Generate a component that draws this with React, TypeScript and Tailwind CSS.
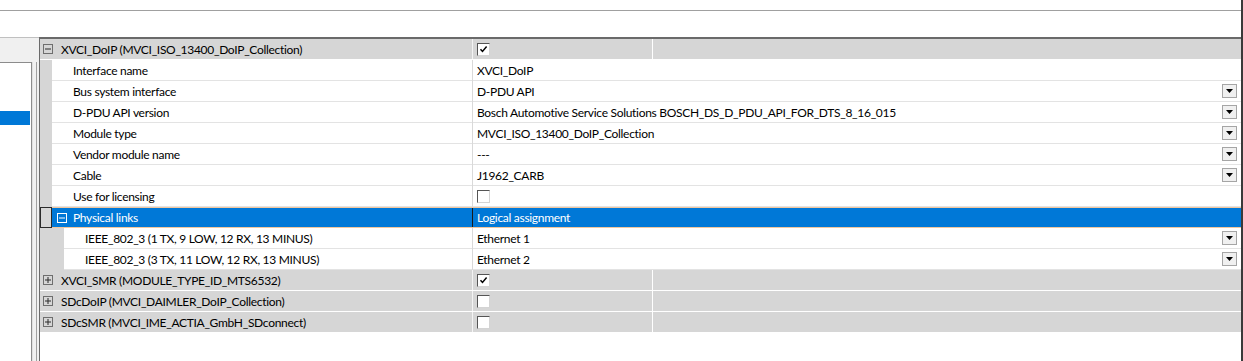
import React from "react";

type Row =
  | { kind: "group"; label: string; checked: boolean; expanded: boolean }
  | { kind: "prop"; level: 1 | 2; label: string; value?: string; dd?: boolean; check?: boolean }
  | { kind: "sel"; label: string; value: string };

const rows: Row[] = [
  { kind: "group", label: "XVCI_DoIP (MVCI_ISO_13400_DoIP_Collection)", checked: true, expanded: true },
  { kind: "prop", level: 1, label: "Interface name", value: "XVCI_DoIP" },
  { kind: "prop", level: 1, label: "Bus system interface", value: "D-PDU API", dd: true },
  { kind: "prop", level: 1, label: "D-PDU API version", value: "Bosch Automotive Service Solutions BOSCH_DS_D_PDU_API_FOR_DTS_8_16_015", dd: true },
  { kind: "prop", level: 1, label: "Module type", value: "MVCI_ISO_13400_DoIP_Collection", dd: true },
  { kind: "prop", level: 1, label: "Vendor module name", value: "---", dd: true },
  { kind: "prop", level: 1, label: "Cable", value: "J1962_CARB", dd: true },
  { kind: "prop", level: 1, label: "Use for licensing", check: true },
  { kind: "sel", label: "Physical links", value: "Logical assignment" },
  { kind: "prop", level: 2, label: "IEEE_802_3 (1 TX, 9 LOW, 12 RX, 13 MINUS)", value: "Ethernet 1", dd: true },
  { kind: "prop", level: 2, label: "IEEE_802_3 (3 TX, 11 LOW, 12 RX, 13 MINUS)", value: "Ethernet 2", dd: true },
  { kind: "group", label: "XVCI_SMR (MODULE_TYPE_ID_MTS6532)", checked: true, expanded: false },
  { kind: "group", label: "SDcDoIP (MVCI_DAIMLER_DoIP_Collection)", checked: false, expanded: false },
  { kind: "group", label: "SDcSMR (MVCI_IME_ACTIA_GmbH_SDconnect)", checked: false, expanded: false },
];

function ExpandBox({ expanded, light }: { expanded: boolean; light?: boolean }) {
  const c = light ? "#ffffff" : "#2a2a2a";
  return (
    <svg width="10" height="10" viewBox="0 0 10 10" className="shrink-0">
      <rect x="0.5" y="0.5" width="9" height="9" fill="none" stroke={light ? "#ffffff" : "#6e6e6e"} />
      <line x1="2" y1="5" x2="8" y2="5" stroke={c} />
      {!expanded && <line x1="5" y1="2" x2="5" y2="8" stroke={c} />}
    </svg>
  );
}

function CheckBox({ checked }: { checked: boolean }) {
  return (
    <div className="w-[13px] h-[13px] bg-white border-t border-l border-t-[#555] border-l-[#555] border-b border-r border-b-[#d4d4d4] border-r-[#d4d4d4] flex items-center justify-center shrink-0">
      {checked && (
        <svg width="9" height="9" viewBox="0 0 9 9">
          <path d="M1.5 4.2 L3.5 6.4 L7.6 1.6" fill="none" stroke="#000" strokeWidth="1.5" />
        </svg>
      )}
    </div>
  );
}

function DropBtn() {
  return (
    <div className="w-[15px] h-[14px] bg-[#f0f0f0] border border-[#a5a5a5] flex items-center justify-center shrink-0">
      <svg width="7" height="4" viewBox="0 0 7 4">
        <path d="M0 0 H7 L3.5 4 Z" fill="#000" />
      </svg>
    </div>
  );
}

function GridRow({ row }: { row: Row }) {
  if (row.kind === "group") {
    return (
      <div className="flex h-[21px] bg-[#d6d6d6] border-b border-white">
        <div className="w-[432px] flex items-center pl-[3px]">
          <ExpandBox expanded={row.expanded} />
          <span className="ml-[8px] text-black whitespace-nowrap pt-px">{row.label}</span>
        </div>
        <div className="w-px bg-[#f4f4f4]" />
        <div className="w-[179px] flex items-center pl-[4px]">
          <CheckBox checked={row.checked} />
        </div>
        <div className="w-px bg-white" />
        <div className="flex-1" />
      </div>
    );
  }
  if (row.kind === "sel") {
    return (
      <div className="flex h-[21px]">
        <div className="w-[12px] border border-[#2a2a2a] bg-[#d6d6d6]" />
        <div className="flex-1 flex border-y border-[#f1c79f] bg-[#0078d7]">
          <div className="w-[420px] flex items-center pl-[5px]">
            <ExpandBox expanded light />
            <span className="ml-[6px] text-white whitespace-nowrap pt-px">{row.label}</span>
          </div>
          <div className="w-px bg-[#1a1a1a]" />
          <div className="flex-1 flex items-center pl-[4px]">
            <span className="text-white whitespace-nowrap pt-px">{row.value}</span>
          </div>
        </div>
      </div>
    );
  }
  const indent = row.level === 1 ? "w-[12px]" : "w-[24px]";
  const nameW = row.level === 1 ? "w-[420px]" : "w-[408px]";
  return (
    <div className="flex h-[21px]">
      <div className={`${indent} bg-[#d6d6d6]`} />
      <div className={`${nameW} flex items-center pl-[21px] bg-white border-b border-[#e3e3e3]`}>
        <span className="text-black whitespace-nowrap pt-px">{row.label}</span>
      </div>
      <div className="w-px bg-[#d9d9d9]" />
      <div className="flex-1 flex items-center pl-[4px] pr-[4px] bg-white border-b border-[#e3e3e3]">
        {row.check ? (
          <CheckBox checked={false} />
        ) : (
          <span className="text-black whitespace-nowrap flex-1 pt-px">{row.value}</span>
        )}
        {row.dd && <DropBtn />}
      </div>
    </div>
  );
}

export default function App() {
  return (
    <div
      className="w-[1243px] h-[361px] bg-white flex overflow-hidden text-[12px] leading-none tracking-[-0.3px]"
      style={{ fontFamily: 'Lato, "Liberation Sans", sans-serif' }}
    >
      <div className="w-[1241px] flex flex-col">
        <div className="h-[10px]" />
        <div className="h-px bg-[#a0a0a0]" />
        <div className="h-[26px]" />
        <div className="flex flex-1">
          <div className="w-[39px] flex flex-col border-t border-[#c0c0c0]">
            <div className="h-[24px] bg-[#f0f0f0]" />
            <div className="flex flex-1">
              <div className="w-[32px] bg-white border-t border-r border-[#8c8c8c] pt-[48px]">
                <div className="h-[14px] w-[30px] bg-[#0078d7]" />
              </div>
              <div className="w-px bg-[#e0e0e0]" />
              <div className="w-[3px] bg-[#f0f0f0]" />
              <div className="w-px bg-[#a0a0a0]" />
              <div className="w-[2px] bg-[#f0f0f0]" />
            </div>
          </div>
          <div className="flex-1 flex flex-col border-l border-t-2 border-l-[#6a6a6a] border-t-[#6a6a6a]">
            {rows.map((r, i) => (
              <GridRow key={i} row={r} />
            ))}
            <div className="flex-1 bg-white" />
          </div>
        </div>
      </div>
      <div className="w-[2px] bg-[#3a3a3a]" />
    </div>
  );
}
